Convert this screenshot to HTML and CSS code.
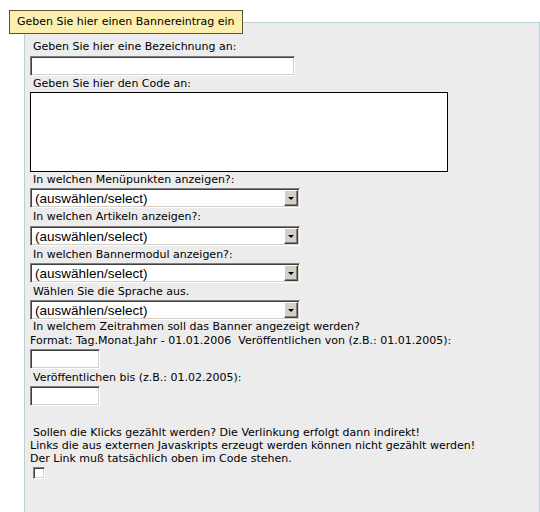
FILE: index.html
```html
<!DOCTYPE html>
<html lang="de">
<head>
  <meta charset="UTF-8" />
  <title>Bannereintrag</title>
  <link rel="stylesheet" href="styles.css">
</head>
<body>

  <!-- Formular für neuen Banner -->
  <form class="banner-form">
    <fieldset class="box">
      <legend class="box-title">Geben Sie hier einen Bannereintrag ein</legend>

      <label class="lbl lbl-first ind" for="bez">Geben Sie hier eine Bezeichnung an:</label>
      <input class="field field-wide" id="bez" type="text" />

      <label class="lbl lbl-16 ind" for="code">Geben Sie hier den Code an:</label>
      <textarea class="code" id="code"></textarea>

      <label class="lbl lbl-16 ind" for="menu">In welchen Menüpunkten anzeigen?:</label>
      <div class="pick">
        <select id="menu"><option>(auswählen/select)</option></select>
        <span class="pick-btn"></span>
      </div>

      <label class="lbl lbl-18 ind" for="artikel">In welchen Artikeln anzeigen?:</label>
      <div class="pick">
        <select id="artikel"><option>(auswählen/select)</option></select>
        <span class="pick-btn"></span>
      </div>

      <label class="lbl lbl-17 ind" for="modul">In welchen Bannermodul anzeigen?:</label>
      <div class="pick">
        <select id="modul"><option>(auswählen/select)</option></select>
        <span class="pick-btn"></span>
      </div>

      <label class="lbl lbl-17 ind" for="sprache">Wählen Sie die Sprache aus.</label>
      <div class="pick">
        <select id="sprache"><option>(auswählen/select)</option></select>
        <span class="pick-btn"></span>
      </div>

      <div class="lbl lbl-13 ind">In welchem Zeitrahmen soll das Banner angezeigt werden?</div>
      <label class="lbl lbl-16" for="von">Format: Tag.Monat.Jahr - 01.01.2006&nbsp; Veröffentlichen von (z.B.: 01.01.2005):</label>
      <input class="field field-date" id="von" type="text" />

      <label class="lbl lbl-17 ind" for="bis">Veröffentlichen bis (z.B.: 01.02.2005):</label>
      <input class="field field-date" id="bis" type="text" />

      <p class="note">
        <span class="ind">Sollen die Klicks gezählt werden? Die Verlinkung erfolgt dann indirekt!</span><br>
        Links die aus externen Javaskripts erzeugt werden können nicht gezählt werden!<br>
        Der Link muß tatsächlich oben im Code stehen.
      </p>
      <input class="check" type="checkbox" />
    </fieldset>
  </form>

</body>
</html>
```

FILE: styles.css
```css
body {
  margin: 0;
  background-color: #fff;
  color: #000;
  font-family: "DejaVu Sans", Verdana, sans-serif;
  font-size: 11px;
}

.banner-form {
  margin: 0;
}

.box {
  margin: 10px 0 0 24px;
  padding: 0 0 0 5px;
  min-height: 520px;
  border: 1px solid #bccfd3;
  background-color: #ececec;
}

.box-title {
  margin-left: -21px;
  padding: 0 7px;
  line-height: 22px;
  border: 1px solid #5c5234;
  background-color: #fcefae;
}

.lbl {
  display: block;
  line-height: 16px;
  white-space: nowrap;
}

.ind {
  padding-left: 3px;
}

.lbl-first {
  padding-top: 4px;
  line-height: 18px;
}

.lbl-13 { line-height: 13px; }
.lbl-16 { line-height: 16px; }
.lbl-17 { line-height: 17px; }
.lbl-18 { line-height: 18px; }

.field {
  display: block;
  box-sizing: border-box;
  height: 20px;
  margin: 0;
  padding: 1px 3px;
  border: 1px solid;
  border-color: #808080 #fff #fff #808080;
  box-shadow: inset 1px 1px #404040, inset -1px -1px #d4d0c8;
  background-color: #fff;
  font: 13px "Liberation Sans", Arial, sans-serif;
}

.field-wide {
  width: 265px;
}

.field-date {
  width: 70px;
}

.code {
  display: block;
  box-sizing: border-box;
  width: 418px;
  height: 80px;
  margin: 0;
  border: 1px solid #000;
  background-color: #fff;
  resize: none;
}

.pick {
  position: relative;
  width: 270px;
  height: 20px;
}

.pick select {
  appearance: none;
  display: block;
  box-sizing: border-box;
  width: 100%;
  height: 100%;
  margin: 0;
  padding: 0 0 0 4px;
  border: 1px solid;
  border-color: #808080 #fff #fff #808080;
  border-radius: 0;
  box-shadow: inset 1px 1px #404040, inset -1px -1px #d4d0c8;
  background-color: #fff;
  color: #000;
  font: 13.5px "Liberation Sans", Arial, sans-serif;
}

.pick-btn {
  position: absolute;
  top: 2px;
  right: 2px;
  width: 14px;
  height: 16px;
  box-sizing: border-box;
  border: 1px solid;
  border-color: #fff #404040 #404040 #fff;
  box-shadow: inset -1px -1px #808080;
  background-color: #d4d0c8;
  pointer-events: none;
}

.pick-btn::after {
  content: "";
  position: absolute;
  left: 3px;
  top: 6px;
  border-left: 3px solid transparent;
  border-right: 3px solid transparent;
  border-top: 3px solid #000;
}

.note {
  margin: 20px 0 0;
  line-height: 13px;
}

.check {
  appearance: none;
  display: block;
  box-sizing: border-box;
  width: 12px;
  height: 12px;
  margin: 2px 0 0 3px;
  border: 1px solid;
  border-color: #808080 #fff #fff #808080;
  box-shadow: inset 1px 1px #404040, inset -1px -1px #d4d0c8;
  background-color: #fff;
}
```
